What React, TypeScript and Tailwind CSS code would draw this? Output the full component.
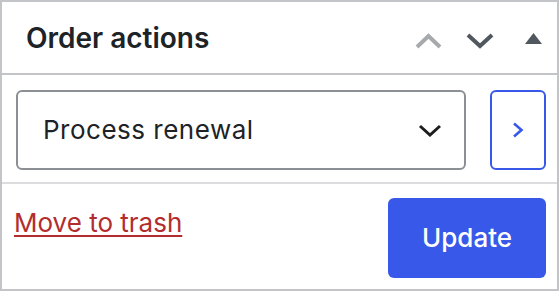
import React from "react";

export default function App() {
  return (
    <div
      className="w-[559px] h-[291px] border-2 border-[#c3c4c7] bg-white flex flex-col text-[#1d2327]"
      style={{ fontFamily: "Inter, 'Noto Sans', sans-serif" }}
    >
      <div className="h-[73px] shrink-0 border-b-2 border-[#c3c4c7] flex items-center pl-[24px] pr-[15px]">
        <h2 className="text-[28px] font-semibold leading-none flex-1">Order actions</h2>
        <div className="flex items-center">
          <svg width="27" height="16" viewBox="0 0 27 16" className="mt-[6px]">
            <polyline points="2,14 13.5,3 25,14" fill="none" stroke="#a7aaad" strokeWidth="4" />
          </svg>
          <svg width="28" height="16" viewBox="0 0 28 16" className="ml-[24px] mt-[6px]">
            <polyline points="2,2 14,13 26,2" fill="none" stroke="#50575e" strokeWidth="4" />
          </svg>
          <svg width="17" height="11" viewBox="0 0 17 11" className="ml-[31px] mt-[1px]">
            <polygon points="8.5,0 17,11 0,11" fill="#50575e" />
          </svg>
        </div>
      </div>
      <div className="pt-[15px] pl-[14px] pr-[11px] flex items-stretch gap-[24px] shrink-0">
        <div className="w-[450px] h-[80px] border-2 border-[#8c8f94] rounded-[6px] flex items-center pl-[25px] pr-[22px]">
          <span className="flex-1 text-[26px] leading-none tracking-[0.5px]">Process renewal</span>
          <svg width="24" height="13" viewBox="0 0 24 13">
            <polyline points="2,2 12,11 22,2" fill="none" stroke="#1e1e1e" strokeWidth="3" />
          </svg>
        </div>
        <div className="w-[56px] h-[80px] border-2 border-[#3858e9] rounded-[6px] flex items-center justify-center">
          <svg width="12" height="16" viewBox="0 0 12 16">
            <polyline points="2,1.5 9.5,8 2,14.5" fill="none" stroke="#3858e9" strokeWidth="2.6" />
          </svg>
        </div>
      </div>
      <div className="mt-[12px] border-t-2 border-[#dcdcde] flex-1 flex items-start justify-between pt-[14px] pl-[12px] pr-[11px]">
        <a href="#" className="mt-[9px] text-[26px] leading-[32px] text-[#b32d2e] underline decoration-2 underline-offset-[3px]">
          Move to trash
        </a>
        <button className="w-[158px] h-[80px] bg-[#3858e9] rounded-[6px] text-white text-[26px] font-medium leading-none">
          Update
        </button>
      </div>
    </div>
  );
}
